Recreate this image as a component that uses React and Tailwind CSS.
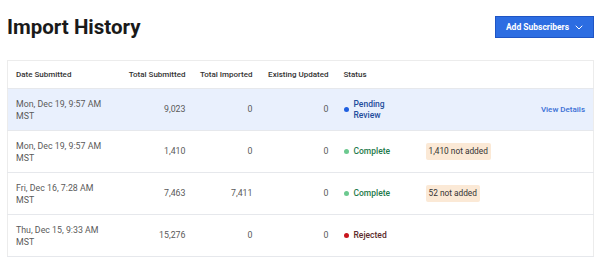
const rows = [
  {
    date: 'Mon, Dec 19, 9:57 AM',
    submitted: '9,023',
    imported: '0',
    updated: '0',
    status: 'pending',
    note: null,
    highlight: true,
  },
  { date: 'Mon, Dec 19, 9:57 AM', submitted: '1,410', imported: '0', updated: '0', status: 'complete', note: '1,410 not added' },
  { date: 'Fri, Dec 16, 7:28 AM', submitted: '7,463', imported: '7,411', updated: '0', status: 'complete', note: '52 not added' },
  { date: 'Thu, Dec 15, 9:33 AM', submitted: '15,276', imported: '0', updated: '0', status: 'rejected', note: null },
]

const statusStyles = {
  pending: { label: 'Pending Review', dot: 'bg-[#1f5fe0]', text: 'text-[#1f4d9c]' },
  complete: { label: 'Complete', dot: 'bg-[#6cc98f]', text: 'text-[#1e7a4b]' },
  rejected: { label: 'Rejected', dot: 'bg-[#c8161d]', text: 'text-[#5b2b2b]' },
}

function StatusCell({ status }) {
  const s = statusStyles[status]
  return (
    <div className="flex items-center gap-[5px]">
      <span className={`h-[5px] w-[5px] shrink-0 rounded-full ${s.dot}`} />
      <span className={`w-[40px] text-[8.5px] font-medium leading-[11px] ${s.text}`}>{s.label}</span>
    </div>
  )
}

export default function App() {
  return (
    <div
      className="h-[260px] w-[600px] overflow-hidden bg-white pl-[7px] pr-[6px] text-[8.8px] text-[#5a5a5a]"
      style={{ fontFamily: 'Roboto, "Liberation Sans", sans-serif' }}
    >
      <div className="flex h-[60px] items-start justify-between pt-[14px]">
        <h1 className="text-[20.5px] font-bold leading-[26px] text-[#1a1a1a]">Import History</h1>
        <button
          type="button"
          className="mt-[2px] flex h-[22px] w-[99px] items-center justify-center gap-[6px] border border-[#1f55c4] bg-[#2c6de2] text-[8.5px] font-bold text-white"
        >
          Add Subscribers
          <svg width="8" height="5" viewBox="0 0 8 5" fill="none">
            <path d="M1 1l3 3 3-3" stroke="white" strokeWidth="1" strokeLinecap="round" strokeLinejoin="round" />
          </svg>
        </button>
      </div>

      <table className="w-full table-fixed border-collapse border border-[#ececec]">
        <colgroup>
          <col className="w-[113px]" />
          <col className="w-[73px]" />
          <col className="w-[67px]" />
          <col className="w-[76px]" />
          <col className="w-[82px]" />
          <col className="w-[100px]" />
          <col />
        </colgroup>
        <thead>
          <tr className="h-[28px] border-b border-[#e6e8ec] text-[8px] text-[#333]">
            <th className="pl-[8px] text-left font-medium">Date Submitted</th>
            <th className="pr-[8px] text-right font-medium">Total Submitted</th>
            <th className="pr-[8px] text-right font-medium">Total Imported</th>
            <th className="pr-[8px] text-right font-medium">Existing Updated</th>
            <th className="pl-[7px] text-left font-medium">Status</th>
            <th />
            <th />
          </tr>
        </thead>
        <tbody>
          {rows.map((r, i) => (
            <tr
              key={i}
              className={`h-[42px] border-b border-[#e6e8ec] ${r.highlight ? 'bg-[#e9f0fd]' : 'bg-white'}`}
            >
              <td className="pl-[8px] pr-[10px] leading-[12px]">
                {r.date}
                <br />
                MST
              </td>
              <td className="pr-[8px] text-right">{r.submitted}</td>
              <td className="pr-[8px] text-right">{r.imported}</td>
              <td className="pr-[8px] text-right">{r.updated}</td>
              <td className="pl-[7px]">
                <StatusCell status={r.status} />
              </td>
              <td className="pl-[7px]">
                {r.note && (
                  <span className="inline-block rounded-[2px] bg-[#fbe9d6] px-[3px] py-[2px] text-[8.3px] text-[#333]">
                    {r.note}
                  </span>
                )}
              </td>
              <td className="pr-[8px] text-right">
                {r.highlight && <span className="text-[8px] font-medium text-[#3a6fd6]">View Details</span>}
              </td>
            </tr>
          ))}
        </tbody>
      </table>
    </div>
  )
}
